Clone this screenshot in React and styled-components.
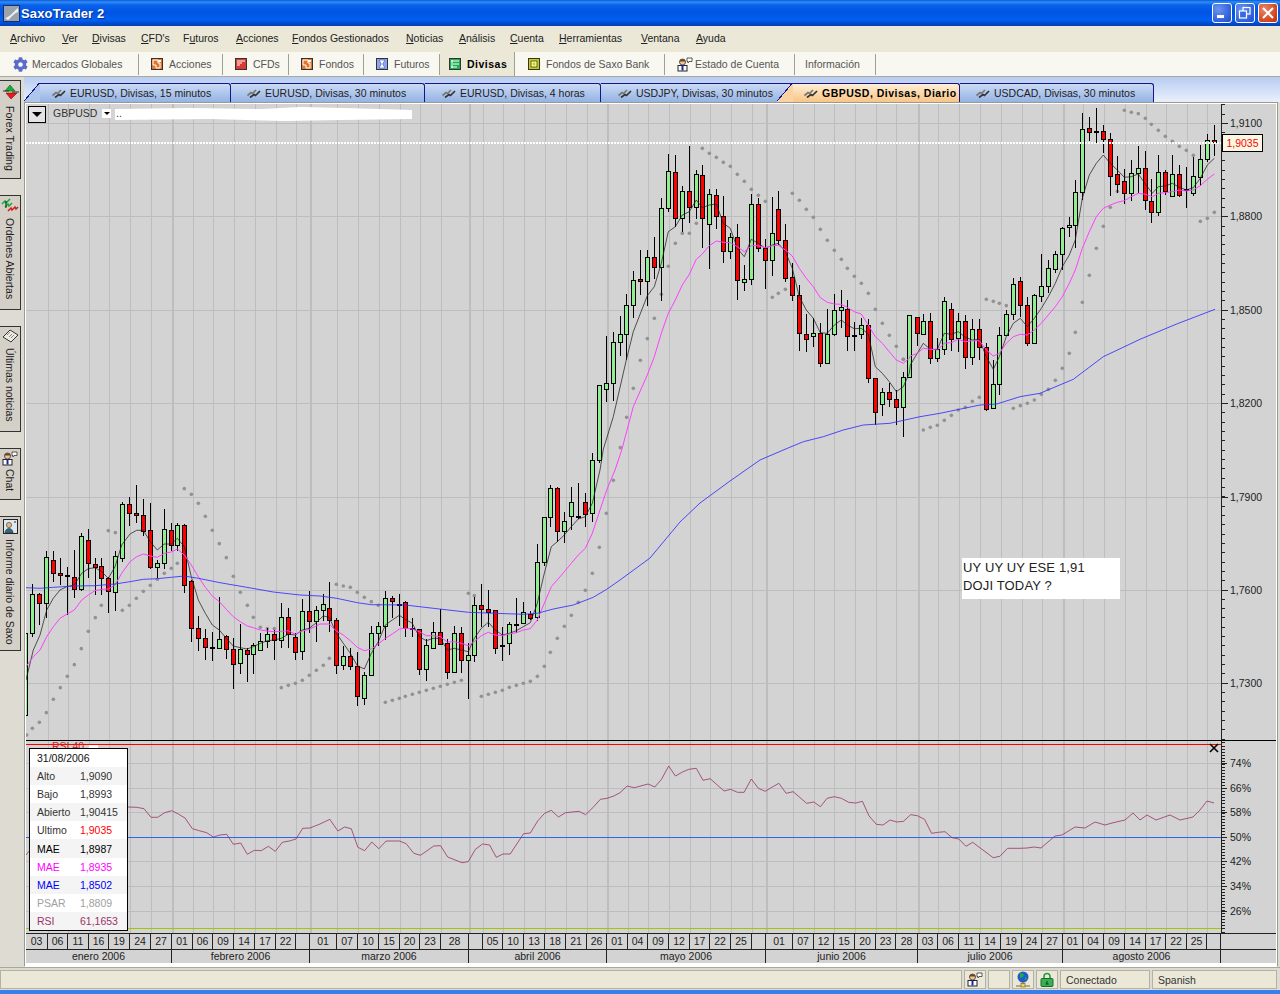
import React from 'react';
import styled, { createGlobalStyle } from 'styled-components';
import { FaCog } from 'react-icons/fa';

const UI_FONT = '"Liberation Sans", Arial, sans-serif';

// chart numbers were read off crops, so every block keeps the crop's origin (crop px = 3x page px)
const crop = (ox, oy) => (x, y) => [ox + x / 3, oy + y / 3];
const mapPts = (ox, oy, pts) => pts.map(([x, y]) => crop(ox, oy)(x, y));
const mapCandles = (ox, oy, rows) =>
  rows.map(([x, hi, top, bot, lo, c]) => ({
    x: Math.floor(ox + x / 3) + 0.5,
    hi: oy + hi / 3,
    top: oy + top / 3,
    bot: oy + bot / 3,
    lo: oy + lo / 3,
    c,
  }));

const candles = [
  ...mapCandles(20, 470, [
    [17, 490, 490, 736, 745, 'G'], [37, 343, 373, 490, 500, 'G'], [58, 370, 373, 400, 465, 'R'], [79, 243, 262, 400, 443, 'G'],
    [100, 243, 271, 310, 335, 'R'], [121, 265, 310, 316, 345, 'R'], [142, 292, 316, 319, 435, 'R'], [163, 240, 320, 358, 385, 'R'],
    [184, 190, 199, 358, 362, 'G'], [205, 178, 211, 280, 323, 'R'], [226, 265, 283, 290, 375, 'R'], [244, 265, 289, 325, 375, 'R'],
    [265, 322, 325, 364, 428, 'R'], [286, 243, 259, 367, 423, 'G'], [307, 96, 103, 265, 275, 'G'], [328, 82, 103, 130, 167, 'R'],
    [349, 45, 130, 136, 158, 'R'], [370, 88, 136, 184, 197, 'R'], [391, 100, 181, 292, 297, 'R'], [412, 270, 280, 290, 323, 'G'],
    [433, 118, 178, 280, 298, 'G'], [454, 160, 181, 226, 243, 'R'], [472, 160, 166, 226, 243, 'G'], [493, 163, 166, 346, 368, 'R'],
    [514, 330, 332, 475, 515, 'R'], [535, 438, 475, 505, 542, 'R'], [556, 477, 505, 532, 570, 'R'], [577, 487, 532, 535, 572, 'R'],
    [598, 381, 508, 535, 535, 'G'], [619, 495, 499, 538, 567, 'R'], [640, 503, 538, 583, 656, 'R'], [661, 463, 538, 580, 611, 'G'],
    [682, 533, 539, 553, 635, 'R'], [700, 520, 526, 553, 611, 'G'], [721, 489, 514, 541, 541, 'G'], [742, 475, 493, 512, 533, 'G'],
    [763, 480, 493, 511, 569, 'R'], [784, 400, 442, 511, 533, 'G'], [805, 415, 442, 493, 535, 'R'], [826, 490, 500, 547, 569, 'R'],
    [847, 388, 424, 544, 569, 'G'], [868, 363, 424, 454, 488, 'R'], [889, 408, 421, 454, 515, 'G'],
  ]),
  ...mapCandles(320, 470, [
    [10, 373, 403, 421, 452, 'G'], [28, 337, 415, 451, 485, 'R'], [49, 445, 451, 586, 611, 'R'], [70, 528, 559, 586, 600, 'G'],
    [91, 535, 559, 589, 600, 'R'], [112, 546, 589, 677, 707, 'R'], [133, 605, 616, 685, 705, 'G'], [154, 469, 490, 616, 616, 'G'],
    [175, 457, 469, 490, 527, 'G'], [196, 363, 385, 469, 510, 'G'], [217, 378, 385, 394, 445, 'R'], [238, 373, 403, 405, 468, 'R'],
    [256, 393, 395, 475, 500, 'R'], [277, 445, 475, 478, 500, 'R'], [298, 478, 478, 596, 615, 'R'], [319, 507, 526, 596, 633, 'G'],
    [340, 457, 487, 535, 535, 'G'], [361, 417, 487, 521, 525, 'R'], [382, 508, 520, 607, 627, 'R'], [403, 468, 490, 605, 608, 'G'],
    [424, 470, 490, 571, 608, 'R'], [445, 520, 556, 571, 686, 'G'], [463, 380, 406, 556, 576, 'G'], [484, 342, 406, 418, 470, 'R'],
    [505, 360, 418, 425, 470, 'R'], [526, 420, 421, 535, 553, 'R'], [547, 470, 524, 526, 572, 'R'], [568, 457, 463, 520, 555, 'G'],
    [589, 385, 461, 463, 490, 'R'], [610, 395, 427, 460, 462, 'G'], [631, 422, 431, 445, 450, 'R'], [652, 222, 277, 442, 452, 'G'],
    [673, 142, 142, 277, 288, 'G'], [691, 45, 55, 142, 170, 'G'], [712, 52, 55, 184, 216, 'R'], [733, 127, 154, 184, 220, 'G'],
    [754, 50, 97, 139, 180, 'G'], [775, 40, 139, 141, 148, 'R'], [796, 70, 97, 131, 172, 'R'], [817, -50, -30, 130, 156, 'G'],
  ]),
  ...mapCandles(590, 130, [
    [28, 765, 766, 990, 1000, 'G'], [49, 618, 760, 778, 815, 'G'], [70, 606, 637, 760, 812, 'G'], [91, 558, 613, 637, 678, 'G'],
    [109, 492, 526, 613, 690, 'G'], [130, 423, 451, 526, 564, 'G'], [151, 360, 448, 454, 495, 'R'], [172, 360, 382, 454, 528, 'G'],
    [193, 322, 382, 412, 447, 'R'], [214, 205, 235, 412, 513, 'G'], [235, 72, 124, 235, 245, 'G'], [256, 75, 127, 263, 290, 'R'],
    [277, 168, 184, 263, 305, 'G'], [298, 48, 184, 232, 280, 'R'], [319, 120, 133, 232, 267, 'G'], [337, 105, 136, 263, 355, 'R'],
    [358, 178, 193, 283, 417, 'G'], [379, 178, 196, 259, 298, 'R'], [400, 198, 259, 364, 398, 'R'], [421, 310, 322, 364, 387, 'G'],
    [442, 283, 322, 451, 510, 'R'], [463, 405, 448, 457, 483, 'G'], [484, 192, 223, 448, 465, 'G'], [505, 205, 223, 355, 365, 'R'],
    [526, 328, 355, 391, 477, 'R'], [547, 202, 310, 391, 437, 'G'], [565, 183, 238, 331, 345, 'R'], [586, 283, 331, 445, 456, 'R'],
    [607, 400, 442, 496, 513, 'R'], [628, 466, 496, 610, 662, 'R'], [649, 553, 613, 628, 665, 'R'], [670, 565, 610, 619, 650, 'G'],
    [691, 580, 610, 700, 710, 'R'], [712, 538, 613, 700, 700, 'G'], [733, 492, 541, 613, 617, 'G'], [754, 480, 532, 541, 595, 'G'],
    [772, 510, 538, 619, 662, 'R'], [793, 577, 616, 619, 662, 'R'], [814, 565, 586, 613, 627, 'G'], [835, 568, 586, 745, 760, 'R'],
    [856, 745, 745, 847, 885, 'R'], [877, 775, 787, 823, 857, 'G'], [898, 760, 787, 808, 832, 'R'], [919, 780, 808, 832, 885, 'R'],
    [940, 727, 742, 832, 922, 'G'], [958, 555, 555, 742, 745, 'G'],
  ]),
  ...mapCandles(900, 100, [
    [52, 650, 650, 700, 738, 'R'], [70, 643, 664, 703, 706, 'G'], [91, 640, 664, 775, 792, 'R'], [112, 715, 748, 775, 787, 'G'],
    [133, 592, 604, 748, 766, 'G'], [154, 610, 628, 718, 752, 'R'], [175, 640, 664, 715, 755, 'G'], [196, 645, 664, 772, 808, 'R'],
    [217, 658, 686, 772, 795, 'G'], [238, 658, 686, 742, 780, 'R'], [259, 730, 742, 927, 932, 'R'], [280, 780, 853, 925, 925, 'G'],
    [298, 682, 706, 853, 884, 'G'], [319, 630, 643, 706, 708, 'G'], [340, 535, 553, 643, 660, 'G'], [361, 530, 544, 616, 650, 'R'],
    [382, 590, 616, 730, 737, 'R'], [403, 582, 586, 730, 733, 'G'], [424, 463, 559, 589, 605, 'G'], [445, 480, 505, 559, 580, 'G'],
    [466, 452, 463, 508, 518, 'G'], [487, 380, 385, 463, 510, 'G'], [508, 350, 376, 382, 412, 'G'], [526, 240, 277, 376, 443, 'G'],
    [547, 40, 88, 277, 300, 'G'], [568, 52, 85, 97, 123, 'R'], [589, 25, 94, 97, 130, 'R'], [610, 75, 94, 118, 160, 'R'],
    [631, 100, 118, 227, 287, 'R'], [652, 168, 223, 253, 280, 'R'], [673, 208, 244, 280, 311, 'R'], [694, 180, 220, 280, 302, 'G'],
    [715, 138, 205, 220, 280, 'G'], [736, 153, 205, 301, 330, 'R'], [754, 238, 304, 337, 370, 'R'], [775, 165, 217, 337, 347, 'G'],
    [796, 210, 217, 274, 285, 'R'], [817, 165, 223, 289, 290, 'G'], [838, 195, 223, 286, 290, 'R'], [859, 200, 268, 270, 323, 'R'],
    [880, 172, 229, 280, 287, 'G'], [901, 135, 178, 232, 258, 'G'], [922, 102, 121, 178, 187, 'G'], [943, 75, 121, 127, 168, 'R'],
  ]),
];

const maeFast = [
  ...mapPts(20, 470, [[18, 630], [40, 540], [60, 495], [80, 420], [100, 385], [120, 360], [140, 350], [163, 345], [185, 310], [205, 296], [225, 293], [245, 305], [265, 325], [285, 290], [305, 225], [330, 192], [350, 181], [370, 181], [391, 215], [412, 240], [433, 222], [454, 222], [472, 205], [493, 230], [514, 320], [535, 390], [556, 430], [577, 465], [598, 480], [619, 505], [640, 528], [661, 533], [682, 537], [700, 530], [721, 520], [742, 512], [763, 510], [784, 505], [805, 493], [826, 495], [847, 480], [868, 475], [889, 458]]),
  ...mapPts(320, 470, [[0, 447], [10, 438], [28, 442], [49, 490], [70, 520], [91, 550], [112, 587], [133, 597], [154, 550], [175, 515], [196, 465], [217, 450], [238, 436], [256, 448], [277, 460], [298, 500], [319, 512], [340, 505], [361, 505], [382, 540], [403, 535], [424, 540], [445, 545], [463, 505], [484, 475], [505, 457], [526, 480], [547, 495], [568, 490], [589, 482], [610, 470], [631, 458], [652, 400], [673, 310], [694, 230], [712, 215], [733, 195], [754, 170], [775, 147], [796, 140], [817, 100], [840, 0]]),
  ...mapPts(590, 130, [[40, 958], [70, 860], [109, 690], [130, 605], [172, 497], [193, 470], [214, 400], [235, 305], [256, 290], [277, 255], [298, 245], [319, 210], [337, 233], [358, 225], [379, 222], [400, 280], [421, 295], [442, 355], [463, 380], [484, 328], [505, 340], [526, 355], [547, 345], [565, 340], [586, 365], [607, 415], [628, 500], [649, 540], [670, 565], [691, 608], [712, 610], [733, 585], [754, 570], [772, 585], [793, 596], [814, 595], [835, 612], [856, 710], [877, 730], [898, 755], [919, 785], [940, 770], [958, 730]]),
  ...mapPts(900, 100, [[31, 795], [52, 760], [70, 730], [91, 748], [112, 748], [133, 700], [154, 703], [175, 695], [196, 712], [217, 720], [238, 718], [259, 770], [280, 808], [298, 770], [319, 710], [340, 670], [361, 655], [382, 680], [403, 655], [424, 625], [445, 590], [466, 550], [487, 500], [508, 465], [526, 420], [547, 295], [568, 225], [589, 190], [610, 165], [631, 190], [652, 210], [673, 232], [694, 230], [715, 222], [736, 252], [757, 280], [775, 260], [796, 258], [817, 250], [838, 262], [859, 270], [880, 263], [901, 235], [922, 195], [943, 175]]),
];

const maeMid = [
  ...mapPts(20, 470, [[18, 590], [40, 560], [60, 540], [80, 500], [100, 470], [120, 445], [142, 432], [163, 420], [185, 390], [205, 375], [225, 362], [245, 358], [265, 357], [285, 345], [305, 310], [330, 275], [350, 260], [370, 252], [391, 258], [412, 262], [433, 250], [454, 246], [472, 237], [493, 255], [514, 285], [535, 320], [556, 352], [577, 378], [598, 395], [619, 418], [640, 440], [661, 455], [682, 468], [700, 473], [721, 480], [742, 483], [763, 485], [784, 484], [805, 482], [826, 493], [847, 483], [868, 478], [889, 468]]),
  ...mapPts(320, 470, [[0, 462], [28, 462], [49, 483], [70, 495], [91, 512], [112, 532], [133, 542], [154, 537], [175, 522], [196, 505], [217, 492], [238, 477], [256, 475], [277, 477], [298, 485], [319, 497], [340, 497], [361, 500], [382, 516], [403, 515], [424, 520], [445, 527], [463, 515], [484, 497], [505, 487], [526, 495], [547, 497], [568, 492], [589, 488], [610, 480], [631, 476], [652, 450], [673, 400], [694, 350], [712, 330], [733, 305], [754, 280], [775, 255], [796, 235], [817, 190], [840, 120], [860, 60], [885, 0]]),
  ...mapPts(590, 130, [[95, 960], [130, 830], [172, 735], [193, 680], [214, 610], [235, 550], [256, 510], [277, 465], [298, 433], [319, 388], [337, 372], [358, 347], [379, 333], [400, 337], [421, 338], [442, 350], [463, 365], [484, 347], [505, 347], [526, 353], [547, 347], [565, 346], [586, 360], [607, 378], [628, 415], [649, 445], [670, 470], [691, 503], [712, 517], [733, 522], [754, 523], [772, 532], [793, 545], [814, 552], [835, 585], [856, 620], [877, 640], [898, 665], [919, 690], [940, 700], [958, 685]]),
  ...mapPts(900, 100, [[31, 768], [52, 760], [70, 745], [91, 748], [112, 750], [133, 730], [154, 728], [175, 718], [196, 725], [217, 722], [238, 722], [259, 750], [280, 768], [298, 760], [319, 730], [340, 710], [361, 703], [382, 705], [403, 690], [424, 670], [445, 645], [466, 620], [487, 590], [508, 550], [526, 510], [547, 445], [568, 395], [589, 350], [610, 325], [631, 315], [652, 307], [673, 302], [694, 290], [715, 280], [736, 283], [757, 290], [775, 280], [796, 278], [817, 275], [838, 270], [859, 273], [880, 270], [901, 257], [922, 238], [943, 222]]),
];

const maeSlow = [
  ...mapPts(20, 470, [[18, 353], [60, 355], [100, 352], [163, 348], [225, 347], [285, 342], [330, 335], [370, 328], [412, 326], [454, 322], [493, 318], [535, 325], [600, 338], [680, 352], [760, 366], [840, 375], [900, 378]]),
  ...mapPts(320, 470, [[50, 385], [112, 398], [154, 404], [256, 405], [340, 415], [445, 427], [526, 430], [610, 433], [652, 430], [700, 417], [760, 405], [820, 382], [860, 358], [900, 330]]),
  [650, 558], [680, 522], [700, 503], [730, 481], [760, 460],
  ...mapPts(590, 130, [[585, 958], [640, 935], [700, 920], [760, 900], [820, 885], [900, 880]]),
  ...mapPts(900, 100, [[60, 950], [120, 940], [240, 915], [290, 912], [360, 890], [420, 880], [520, 838], [610, 770], [720, 718], [830, 672], [945, 628]]),
];

const psar = [
  ...mapPts(20, 470, [[20, 795], [37, 775], [58, 757], [79, 728], [100, 688], [121, 653], [142, 619], [163, 584], [184, 536], [205, 484], [226, 443], [244, 406], [307, 421], [328, 406], [349, 385], [370, 364], [391, 346], [412, 328], [433, 310], [454, 295], [472, 280], [265, 182], [286, 188], [493, 56], [514, 73], [535, 100], [556, 139], [577, 181], [598, 221], [619, 263], [640, 319], [661, 367], [682, 406], [700, 442], [721, 472], [742, 476], [763, 476], [784, 653], [805, 646], [826, 640], [847, 631], [868, 616], [889, 601]]),
  ...mapPts(320, 470, [[10, 586], [28, 565], [49, 343], [70, 348], [91, 352], [112, 367], [133, 382], [154, 395], [175, 406], [196, 697], [217, 691], [238, 685], [256, 679], [277, 673], [298, 667], [319, 661], [340, 655], [361, 649], [382, 643], [403, 637], [424, 631], [445, 370], [463, 377], [484, 679], [505, 673], [526, 667], [547, 661], [568, 652], [589, 646], [610, 640], [631, 634], [652, 619], [673, 589], [691, 547], [712, 505], [733, 469], [754, 436], [775, 397], [796, 361], [817, 310], [838, 232], [859, 130], [880, 31]]),
  ...mapPts(590, 130, [[91, 953], [110, 862], [130, 775], [151, 691], [172, 626], [193, 565], [214, 493], [235, 409], [256, 340], [277, 310], [298, 310], [319, 280], [337, 55], [358, 70], [379, 82], [400, 97], [421, 109], [442, 133], [463, 154], [484, 178], [505, 196], [526, 214], [547, 502], [565, 490], [586, 478], [607, 190], [628, 211], [649, 238], [670, 262], [691, 298], [712, 331], [733, 361], [754, 388], [772, 415], [793, 439], [814, 460], [835, 490], [856, 538], [877, 580], [898, 616], [919, 649], [940, 688]]),
  ...mapPts(900, 100, [[10, 778], [70, 990], [91, 982], [112, 976], [133, 961], [154, 946], [175, 930], [196, 922], [217, 904], [238, 892], [340, 925], [361, 917], [382, 910], [403, 900], [424, 883], [445, 868], [466, 841], [487, 805], [508, 760], [526, 697], [547, 607], [568, 526], [589, 445], [610, 379], [631, 322], [652, 274], [259, 598], [280, 604], [298, 610], [319, 617], [673, 31], [694, 37], [715, 41], [736, 55], [754, 73], [775, 91], [796, 109], [817, 124], [838, 139], [859, 151], [880, 166], [901, 364], [922, 355], [943, 337]]),
];

// the RSI crop came back 2.24x wide, 3x tall
const rsiMid = [[0, 252], [22, 238], [40, 273], [55, 261], [70, 266], [85, 322], [100, 332], [116, 306], [132, 326], [148, 303], [178, 303], [193, 311], [210, 340], [225, 346], [255, 318], [270, 317], [286, 351], [318, 368], [332, 365], [348, 328], [364, 312], [380, 315], [395, 352], [410, 342], [426, 342], [456, 281], [471, 279], [488, 242], [503, 220], [518, 211], [534, 231], [550, 218], [580, 214], [595, 224], [612, 202], [628, 178], [643, 175], [658, 168], [672, 158], [688, 138], [704, 143], [735, 132], [750, 141], [765, 118], [781, 78], [796, 108], [812, 96], [826, 88], [843, 85], [858, 121], [874, 116], [905, 153], [920, 148], [935, 157], [950, 157], [966, 117], [982, 145], [997, 154], [1012, 142], [1028, 130], [1044, 160], [1060, 155], [1090, 190], [1106, 186], [1121, 200], [1136, 175], [1152, 170], [1168, 175], [1184, 187], [1200, 189], [1215, 184], [1230, 228], [1246, 253], [1261, 255], [1277, 240], [1292, 246], [1307, 244], [1323, 224], [1338, 227], [1354, 238], [1370, 280], [1385, 277], [1400, 275], [1416, 293], [1431, 297], [1447, 319], [1462, 307], [1508, 353], [1523, 349], [1540, 325], [1568, 325]];

const rsiLine = [
  [26, 855], [30, 850], [127, 807],
  ...mapPts(0, 730, [[410, 232], [432, 236], [453, 262], [473, 262], [494, 248], [515, 242], [535, 252], [555, 264], [577, 296], [598, 302], [620, 308], [640, 321], [660, 315], [680, 313], [700, 343], [722, 339], [742, 373], [763, 361], [784, 362], [805, 349], [826, 364], [847, 337], [868, 333], [888, 327], [908, 295], [930, 294]]),
  ...rsiMid.map(([x, y]) => [320 + x / 2.24, 740 + y / 3]),
  [1027, 848], [1034, 847], [1041, 848], [1055, 836], [1062, 835], [1075, 827], [1085, 828], [1095, 822], [1105, 825], [1112, 823], [1125, 820], [1133, 813], [1140, 820], [1147, 815], [1156, 820], [1170, 815], [1180, 820], [1193, 817], [1200, 810], [1207, 801], [1214, 803],
];

const dates = [['03', 48], ['06', 68], ['11', 89], ['16', 109], ['19', 130], ['24', 151], ['27', 172], ['01', 193], ['06', 213], ['09', 234], ['14', 255], ['17', 276], ['22', 296], ['', 310], ['01', 337], ['07', 358], ['10', 379], ['15', 400], ['20', 420], ['23', 441], ['28', 469], ['', 483], ['05', 503], ['10', 524], ['13', 545], ['18', 566], ['21', 587], ['26', 607], ['01', 628], ['04', 648], ['09', 669], ['12', 690], ['17', 710], ['22', 731], ['25', 752], ['', 766], ['01', 793], ['07', 814], ['12', 834], ['15', 855], ['20', 876], ['23', 896], ['28', 918], ['03', 938], ['06', 959], ['11', 980], ['14', 1001], ['19', 1022], ['24', 1042], ['27', 1063], ['01', 1083], ['04', 1104], ['09', 1125], ['14', 1146], ['17', 1166], ['22', 1187], ['25', 1207], ['', 1221]];
const months = [['enero 2006', 172], ['febrero 2006', 310], ['marzo 2006', 469], ['abril 2006', 607], ['mayo 2006', 766], ['junio 2006', 918], ['julio 2006', 1063], ['agosto 2006', 1221]];
const monthEnds = months.map((m) => m[1]);
const gridX = dates.slice(0, -1).map((d) => d[1]);

const withWidths = (cells) => {
  let prev = 26;
  return cells.map(([label, end]) => {
    const w = end - prev;
    prev = end;
    return { label, w };
  });
};

const priceLabels = [['1,9100', 123], ['1,8800', 216], ['1,8500', 310], ['1,8200', 403], ['1,7900', 497], ['1,7600', 590], ['1,7300', 683]];
const rsiLabels = [['74%', 763], ['66%', 788], ['58%', 812], ['50%', 837], ['42%', 861], ['34%', 886], ['26%', 911]];

const menuItems = [
  ['A', 'rchivo', 52], ['V', 'er', 30], ['D', 'ivisas', 49], ['C', "FD's", 42], ['F', 'uturos', 53, true], ['A', 'cciones', 56],
  ['F', 'ondos Gestionados', 114], ['N', 'oticias', 53], ['A', 'nálisis', 51], ['C', 'uenta', 49], ['H', 'erramientas', 82], ['V', 'entana', 55], ['A', 'yuda', 40],
];

const tabs = [
  { label: 'EURUSD, Divisas, 15 minutos', w: 191, slant: true, pad: 12 },
  { label: 'EURUSD, Divisas, 30 minutos', w: 194, pad: 16 },
  { label: 'EURUSD, Divisas, 4 horas', w: 176, pad: 17 },
  { label: 'USDJPY, Divisas, 30 minutos', w: 192, pad: 17 },
  { label: 'GBPUSD, Divisas, Diario', w: 167, active: true, slant: true, pad: 11 },
  { label: 'USDCAD, Divisas, 30 minutos', w: 194, pad: 16 },
];

const infoRows = [
  ['Alto', '1,9090', '#333', '#333'],
  ['Bajo', '1,8993', '#333', '#333'],
  ['Abierto', '1,90415', '#333', '#333'],
  ['Ultimo', '1,9035', '#333', '#f00'],
  ['MAE', '1,8987', '#000', '#000'],
  ['MAE', '1,8935', '#f0f', '#f0f'],
  ['MAE', '1,8502', '#00f', '#00f'],
  ['PSAR', '1,8809', '#a0a0a0', '#a0a0a0'],
  ['RSI', '61,1653', '#993366', '#993366'],
];

const GlobalStyle = createGlobalStyle`
  html, body { margin: 0; padding: 0; background: #dedbd2; }
  body { font-family: ${UI_FONT}; overflow: hidden; }
`;

const Window = styled.div`
  width: 1280px;
  height: 994px;
  display: flex;
  flex-direction: column;
  overflow: hidden;
  background: #dedbd2;
  font-size: 10.5px;
`;

const TitleBar = styled.div`
  height: 26px;
  display: flex;
  align-items: center;
  padding: 0 2px 0 3px;
  background: linear-gradient(#0a58d8 0, #2f8df5 2px, #0a62ea 5px, #0054e3 12px, #0060f0 20px, #0048c8 24px, #0a3fb0 26px);
`;

const TitleText = styled.span`
  margin-left: 1px;
  flex: 1;
  color: #fff;
  font-weight: bold;
  font-size: 13px;
  letter-spacing: 0.15px;
  text-shadow: 1px 1px 0 #0b2f90;
`;

const WinButton = styled.div`
  width: 20px;
  height: 20px;
  margin-left: 3px;
  border: 1px solid #fff;
  border-radius: 3px;
  box-sizing: border-box;
  display: flex;
  align-items: center;
  justify-content: center;
  background: ${({ $close }) =>
    $close
      ? 'radial-gradient(circle at 30% 30%, #e8866a, #d2441c 70%, #b83410)'
      : 'radial-gradient(circle at 30% 30%, #6c94f0, #2f5fdc 70%, #2450c8)'};
`;

const MenuBar = styled.div`
  height: 26px;
  box-sizing: border-box;
  display: flex;
  align-items: center;
  padding: 0 0 2px 10px;
  background: #ebe8d8;
`;

const MenuItem = styled.span`
  width: ${({ $w }) => $w}px;
  flex: none;
  color: #222;

  u { text-decoration: underline; }
`;

const NavBar = styled.div`
  height: 24px;
  display: flex;
  align-items: stretch;
  background: #f8f7f0;
  border-bottom: 1px solid #a8a8a0;
  box-sizing: content-box;
`;

const NavItem = styled.div`
  flex: none;
  width: ${({ $w }) => $w}px;
  box-sizing: border-box;
  display: flex;
  align-items: center;
  gap: ${({ $gap }) => $gap ?? 6}px;
  padding-left: ${({ $pad }) => $pad}px;
  color: ${({ $active }) => ($active ? '#000' : '#555')};
  font-weight: ${({ $active }) => ($active ? 'bold' : 'normal')};
  letter-spacing: ${({ $active }) => ($active ? '0.5px' : '0')};
  background: ${({ $active }) => ($active ? '#ebe8d8' : 'transparent')};
  position: relative;

  &::after {
    content: '';
    position: absolute;
    right: 0;
    top: ${({ $active }) => ($active ? 0 : 2)}px;
    bottom: ${({ $active }) => ($active ? 0 : 1)}px;
    width: 1px;
    background: #a0a098;
  }
`;

const Body = styled.div`
  flex: 1;
  display: flex;
  min-height: 0;
`;

const Sidebar = styled.div`
  width: 24px;
  flex: none;
  display: flex;
  flex-direction: column;
  gap: 16px;
  padding-top: 3px;
  box-sizing: border-box;
`;

const SideTab = styled.div`
  width: 21px;
  height: ${({ $h }) => $h}px;
  box-sizing: border-box;
  background: #d4d0c8;
  border: 1px solid #333;
  border-left: none;
  writing-mode: vertical-rl;
  display: flex;
  align-items: center;
  gap: ${({ $gap }) => $gap}px;
  padding-top: 2px;
  color: #222;
  white-space: nowrap;

  svg { flex: none; }
`;

const Workspace = styled.div`
  flex: 1;
  display: flex;
  flex-direction: column;
  min-width: 0;
`;

const TabStrip = styled.div`
  height: 25px;
  box-sizing: border-box;
  padding: 6px 0 0 16px;
  display: flex;
  background: linear-gradient(#b7ccf2, #e6edfb 90%);
`;

const Tab = styled.div`
  width: ${({ $w }) => $w}px;
  flex: none;
  height: 19px;
  box-sizing: border-box;
  position: relative;
  display: flex;
  align-items: center;
  gap: 4px;
  padding-left: ${({ $pad }) => $pad}px;
  border-top: 1px solid #14148c;
  border-right: 1px solid #14148c;
  border-top-right-radius: 3px;
  color: ${({ $active }) => ($active ? '#000' : '#222')};
  font-weight: ${({ $active }) => ($active ? 'bold' : 'normal')};
  letter-spacing: ${({ $active }) => ($active ? '0.5px' : '0')};
  background: ${({ $active }) =>
    $active ? 'linear-gradient(#fdeed8, #f9c584)' : 'linear-gradient(#cbdaf4, #94b3e4)'};
  white-space: nowrap;

  &::before {
    content: ${({ $slant }) => ($slant ? "''" : 'none')};
    position: absolute;
    left: -16px;
    top: -1px;
    width: 16px;
    height: 19px;
    background: linear-gradient(
      to bottom right,
      transparent calc(50% - 1px),
      #14148c calc(50% - 1px),
      #14148c 50%,
      ${({ $active }) => ($active ? '#fbd3a0' : '#aec6ec')} 50%
    );
  }
`;

const ChartFrame = styled.div`
  flex: 1;
  min-height: 0;
  border-top: 1px solid #9a9a92;
  border-left: 1px solid #9a9a92;
  border-right: 1px solid #9a9a92;
  border-bottom: 1px solid #fff;
  margin-right: 2px;
  padding: 1px 1px 0;
  background: #fff;
  display: flex;
  flex-direction: column;
  align-items: flex-start;
`;

const Pane = styled.div`
  position: relative;
  flex: none;
  width: 1250px;
  height: ${({ $h }) => $h}px;
  background: #d3d3d3;
  border-bottom: ${({ $line }) => ($line ? '1px solid #000' : 'none')};
  box-sizing: content-box;

  svg.plot { display: block; font-family: ${UI_FONT}; }
`;

const IconBtn = styled.div`
  position: absolute;
  left: 2px;
  top: 2px;
  width: 18px;
  height: 17px;
  box-sizing: border-box;
  border: 1px solid #000;
  background: #e4e4e4;
  display: flex;
  align-items: center;
  justify-content: center;
`;

const Symbol = styled.span`
  position: absolute;
  left: 27px;
  top: 2px;
  color: #333;
  line-height: 14px;
`;

const SymbolMenu = styled.div`
  position: absolute;
  left: 76px;
  top: 5px;
  width: 9px;
  height: 9px;
  background: #fff;
  display: flex;
  align-items: center;
  justify-content: center;
`;

const Arrow = styled.i`
  width: 0;
  height: 0;
  border-left: ${({ $s }) => $s}px solid transparent;
  border-right: ${({ $s }) => $s}px solid transparent;
  border-top: ${({ $s }) => $s}px solid #000;
`;

const PriceTag = styled.div`
  position: absolute;
  left: 1196px;
  top: 30px;
  width: 41px;
  height: 18px;
  box-sizing: border-box;
  border: 1px solid #000;
  background: #fbf9e4;
  color: #f00;
  text-align: center;
  line-height: 16px;
`;

const Note = styled.div`
  position: absolute;
  left: 936px;
  top: 454px;
  width: 158px;
  height: 41px;
  box-sizing: border-box;
  padding: 1px 0 0 1px;
  background: #fff;
  color: #222;
  font-size: 13px;
  line-height: 18px;
  letter-spacing: 0.15px;
  white-space: nowrap;
`;

const InfoBox = styled.div`
  position: absolute;
  left: 3px;
  top: 7px;
  width: 99px;
  box-sizing: border-box;
  border: 1px solid #000;
  background: #fff;
`;

const InfoRow = styled.div`
  height: 18.1px;
  display: grid;
  grid-template-columns: 43px auto;
  align-items: center;
  padding-left: 7px;
  background: ${({ $alt }) => ($alt ? '#f4f4f4' : '#fff')};
`;

const InfoCell = styled.span`
  color: ${({ $color }) => $color};
  white-space: nowrap;
`;

const AxisRow = styled.div`
  flex: none;
  width: 1250px;
  height: ${({ $h }) => $h}px;
  box-sizing: border-box;
  display: flex;
  background: #d3d3d3;
  border-top: 1px solid #222;
`;

const AxisCell = styled.div`
  flex: none;
  width: ${({ $w }) => $w}px;
  box-sizing: border-box;
  border-right: 1px solid #222;
  text-align: center;
  color: #222;
  line-height: ${({ $lh }) => $lh}px;
  white-space: nowrap;
`;

const StatusBar = styled.div`
  height: 23px;
  flex: none;
  box-sizing: border-box;
  border-top: 1px solid #a8a89a;
  padding-top: 2px;
  display: flex;
  gap: 2px;
  padding-right: 3px;
  background: #dedbd2;
`;

const StatusCell = styled.div`
  flex: ${({ $grow }) => ($grow ? '1' : 'none')};
  width: ${({ $w }) => ($w ? `${$w}px` : 'auto')};
  height: 19px;
  box-sizing: border-box;
  border: 1px solid #b4b2a4;
  background: #ebe8d8;
  display: flex;
  align-items: center;
  justify-content: ${({ $icon }) => ($icon ? 'center' : 'flex-start')};
  padding-left: ${({ $icon }) => ($icon ? 0 : 5)}px;
  color: #333;
`;

const BottomEdge = styled.div`
  height: 4px;
  flex: none;
  background: #3a7ee8;
`;

const SquareIcon = ({ fill, children }) => (
  <svg width="12" height="12" viewBox="0 0 12 12">
    <rect x="0.5" y="0.5" width="11" height="11" fill={fill} stroke="#333" />
    {children}
  </svg>
);

const ShareIcon = () => (
  <SquareIcon fill="#e4762a">
    <path d="M2 2h5v3H9v5H5V7H2z" fill="none" stroke="#fff" />
    <rect x="7" y="2" width="3" height="2" fill="#fff" />
  </SquareIcon>
);

const CfdIcon = () => (
  <SquareIcon fill="#d83a34">
    <path d="M2 3h8M2 5h5M2 7h3" stroke="#fff" />
  </SquareIcon>
);

const FutureIcon = () => (
  <SquareIcon fill="#8ea6ec">
    <path d="M3 2h6L6.7 6 9 10H3l2.3-4z" fill="#fff" stroke="#4a62c8" strokeWidth="0.7" />
  </SquareIcon>
);

const ForexIcon = () => (
  <SquareIcon fill="#1eb050">
    <path d="M2 3h8M4 6h6M2 9h6" stroke="#fff" />
    <path d="M3 2v8" stroke="#fff" />
  </SquareIcon>
);

const FundIcon = () => (
  <SquareIcon fill="#c8cc1a">
    <rect x="3" y="3" width="6" height="6" fill="#f4f4c8" stroke="#6a7008" />
    <circle cx="6" cy="6" r="1.4" fill="#c8cc1a" />
  </SquareIcon>
);

const PersonIcon = ({ bubble }) => (
  <svg width="16" height="15" viewBox="0 0 16 15">
    <circle cx="5.5" cy="5" r="3" fill="#f0c890" stroke="#333" strokeWidth="0.8" />
    <path d="M2.5 4.5C3 1.5 8 1.5 8.5 4.5z" fill="#6a4020" />
    <rect x="1" y="8.5" width="9" height="5.5" fill="#fff" stroke="#223" />
    <path d="M5.5 8.5v5" stroke="#1a2a9c" strokeWidth="2" />
    {bubble && <path d="M10 1h5v3.5h-3L11 6V4.5h-1z" fill="#fff" stroke="#333" strokeWidth="0.8" />}
  </svg>
);

const TradeIcon = () => (
  <svg width="14" height="10" viewBox="0 0 14 10">
    <path d="M0.5 7.5L4 4.5l1.5 1L9 2" fill="none" stroke="#777" strokeWidth="1.7" />
    <path d="M3 9.5L7 6.5l1.5 1L13 3" fill="none" stroke="#333" strokeWidth="1.7" />
  </svg>
);

const UpDownIcon = () => (
  <svg width="17" height="17" viewBox="0 0 17 17" style={{ marginTop: 1 }}>
    <path d="M8 1l5 6H3z" fill="#12b030" stroke="#0a5a1a" strokeWidth="0.6" />
    <path d="M1 7h6" stroke="#333" />
    <path d="M9 15L4 9h11z" fill="#ee1818" stroke="#7a0a0a" strokeWidth="0.6" />
    <path d="M10 8h7" stroke="#333" />
  </svg>
);

const TicksIcon = () => (
  <svg width="18" height="16" viewBox="0 0 18 16">
    <path d="M1 6l3-3 1 2 4-4M4 9l3-3 1 2 3-3" fill="none" stroke="#18a83c" strokeWidth="1.6" />
    <path d="M7 13l3-3 1 2 3-3 1 2 2-2" fill="none" stroke="#d41c1c" strokeWidth="1.6" />
    <path d="M5 3v7" stroke="#222" />
  </svg>
);

const NewsIcon = () => (
  <svg width="17" height="15" viewBox="0 0 17 15">
    <path d="M8 1l8 5-7 7-8-5z" fill="#ecebe2" stroke="#333" />
    <path d="M5 6l3-3M7 8l3-3M9 9l3-3" stroke="#888" />
  </svg>
);

const ReportIcon = () => (
  <svg width="15" height="15" viewBox="0 0 15 15">
    <rect x="0.5" y="0.5" width="14" height="14" fill="#dfe8ee" stroke="#222" />
    <circle cx="6" cy="6" r="2.6" fill="#e8b888" stroke="#333" strokeWidth="0.6" />
    <path d="M2 14c0-6 8-6 8 0z" fill="#2a6a8a" stroke="#333" strokeWidth="0.6" />
    <rect x="11" y="2" width="2" height="2" fill="#888" />
  </svg>
);

const GlobeIcon = () => (
  <svg width="17" height="17" viewBox="0 0 17 17">
    <circle cx="8" cy="6" r="5.5" fill="#1c5cd0" />
    <path d="M5 2l4 1-1 3-3 1zM10 6l2 1-2 3z" fill="#2aa838" />
    <path d="M8 11v2M1 15h14" stroke="#806a20" />
    <rect x="6" y="12.5" width="4" height="3.5" fill="#f4d060" stroke="#806a20" strokeWidth="0.7" />
  </svg>
);

const LockIcon = () => (
  <svg width="14" height="15" viewBox="0 0 14 15">
    <path d="M4 7V4.5a3 3 0 0 1 6 0V7" fill="none" stroke="#2a9a44" strokeWidth="1.6" />
    <rect x="1" y="6.5" width="12" height="8" rx="1" fill="#3ab054" stroke="#1a6a2c" />
    <path d="M7 9v3M5.5 12h3" stroke="#0c3a18" />
  </svg>
);

const Polyline = ({ pts, color, width = 1, opacity = 1 }) => (
  <polyline
    points={pts.map(([x, y]) => `${x.toFixed(1)},${y.toFixed(1)}`).join(' ')}
    fill="none"
    stroke={color}
    strokeWidth={width}
    opacity={opacity}
    strokeLinejoin="round"
  />
);

const GridLines = ({ rows, top, bottom }) => (
  <g shapeRendering="crispEdges" stroke="#bdbdbd">
    {gridX.map((x) => (
      <line key={x} x1={x + 0.5} x2={x + 0.5} y1={top} y2={bottom} strokeWidth={monthEnds.includes(x) ? 2 : 1} />
    ))}
    {rows.map((y) => (
      <line key={y} x1="26" x2="1221" y1={y + 0.5} y2={y + 0.5} />
    ))}
  </g>
);

const AxisTicks = ({ top, bottom, step, anchor }) => {
  const ticks = [];
  for (let y = anchor; y < bottom; y += step) ticks.push(y);
  for (let y = anchor - step; y > top; y -= step) ticks.push(y);
  return (
    <g shapeRendering="crispEdges" stroke="#222">
      <line x1="1221.5" x2="1221.5" y1={top} y2={bottom} />
      {ticks.map((y) => (
        <line key={y} x1="1221" x2="1225" y1={Math.round(y) + 0.5} y2={Math.round(y) + 0.5} />
      ))}
    </g>
  );
};

const Candle = ({ x, hi, top, bot, lo, c }) => (
  <g shapeRendering="crispEdges">
    <line x1={x} x2={x} y1={hi} y2={lo} stroke="#000" />
    <rect
      x={x - 2}
      y={Math.round(top) + 0.5}
      width={4}
      height={Math.max(Math.round(bot) - Math.round(top), 1)}
      fill={c === 'G' ? '#90ee90' : '#f00'}
      stroke="#000"
    />
  </g>
);

const MainPlot = () => (
  <svg className="plot" width="1250" height="636" viewBox="26 104 1250 636">
    <GridLines rows={priceLabels.map((p) => p[1])} top={104} bottom={740} />
    {psar.map(([x, y], i) => (
      <circle key={i} cx={x} cy={y} r="1.8" fill="#929292" />
    ))}
    {candles.map((c, i) => (
      <Candle key={i} {...c} />
    ))}
    <Polyline pts={maeFast} color="#222" opacity={0.75} />
    <Polyline pts={maeMid} color="#ff40ff" />
    <Polyline pts={maeSlow} color="#3030ff" opacity={0.85} />
    <line x1="26" x2="1221" y1="143" y2="143" stroke="#fff" strokeWidth="2" strokeDasharray="2 1" />
    <AxisTicks top={104} bottom={740} step={9.33} anchor={123} />
    {priceLabels.map(([t, y]) => (
      <g key={t}>
        <line x1="1221" x2="1228" y1={y + 0.5} y2={y + 0.5} stroke="#222" shapeRendering="crispEdges" />
        <text x="1230" y={y + 4} fontSize="10.5" fill="#222">{t}</text>
      </g>
    ))}
    <path d="M115 109 L190 108 L262 109 L300 107 L345 108 L412 110 L412 119 L340 120 L285 121 L210 119 L115 120Z" fill="#fff" />
    <text x="116" y="117" fontSize="10.5" fill="#333">..</text>
  </svg>
);

const RsiPlot = () => (
  <svg className="plot" width="1250" height="192" viewBox="26 741 1250 192">
    <GridLines rows={rsiLabels.map((p) => p[1])} top={741} bottom={933} />
    <line x1="26" x2="1221" y1="837.5" y2="837.5" stroke="#2a66f0" shapeRendering="crispEdges" />
    <line x1="26" x2="1221" y1="744.5" y2="744.5" stroke="#f00" strokeWidth="1.2" shapeRendering="crispEdges" />
    <line x1="26" x2="1221" y1="928.5" y2="928.5" stroke="#a0c800" shapeRendering="crispEdges" />
    <Polyline pts={rsiLine} color="#993366" opacity={0.8} />
    <text x="52" y="750" fontSize="10.5" fill="#cc2020">RSI 40</text>
    <rect x="89" y="745" width="9" height="4" fill="#fff" />
    <AxisTicks top={741} bottom={933} step={3.05} anchor={837} />
    {rsiLabels.map(([t, y]) => (
      <g key={t}>
        <line x1="1221" x2="1227" y1={y + 0.5} y2={y + 0.5} stroke="#222" shapeRendering="crispEdges" />
        <text x="1230" y={y + 4} fontSize="10.5" fill="#222">{t}</text>
      </g>
    ))}
    <path d="M1210 744l8 8M1218 744l-8 8" stroke="#000" strokeWidth="1.6" />
  </svg>
);

const App = () => (
  <Window>
    <GlobalStyle />
    <TitleBar>
      <svg width="17" height="17" viewBox="0 0 17 17">
        <rect x="0.5" y="0.5" width="16" height="16" fill="#9aa2ae" stroke="#12306e" />
        <path d="M2 13C7 12 10 7 15 3L15 7C10 9 8 13 5 15z" fill="#eef0f4" />
      </svg>
      <TitleText>SaxoTrader 2</TitleText>
      <WinButton>
        <svg width="14" height="14" viewBox="0 0 14 14"><rect x="2" y="9" width="7" height="3" fill="#fff" /></svg>
      </WinButton>
      <WinButton>
        <svg width="14" height="14" viewBox="0 0 14 14" fill="none" stroke="#fff">
          <rect x="5" y="1.5" width="7" height="6.5" strokeWidth="1.2" />
          <rect x="1.5" y="5" width="7" height="7" fill="#3a68e0" strokeWidth="1.2" />
        </svg>
      </WinButton>
      <WinButton $close>
        <svg width="14" height="14" viewBox="0 0 14 14"><path d="M2 2l10 10M12 2L2 12" stroke="#fff" strokeWidth="2" /></svg>
      </WinButton>
    </TitleBar>

    <MenuBar>
      {menuItems.map(([key, rest, w, second]) => (
        <MenuItem key={key + rest} $w={w}>
          {second ? <>{key}<u>{rest[0]}</u>{rest.slice(1)}</> : <><u>{key}</u>{rest}</>}
        </MenuItem>
      ))}
    </MenuBar>

    <NavBar>
      <NavItem $w={139} $pad={13} $gap={4}><FaCog size={15} color="#5a6cc8" />Mercados Globales</NavItem>
      <NavItem $w={84} $pad={12}><ShareIcon />Acciones</NavItem>
      <NavItem $w={66} $pad={12}><CfdIcon />CFDs</NavItem>
      <NavItem $w={75} $pad={12}><ShareIcon />Fondos</NavItem>
      <NavItem $w={76} $pad={12}><FutureIcon />Futuros</NavItem>
      <NavItem $w={75} $pad={9} $active $gap={6}><ForexIcon />Divisas</NavItem>
      <NavItem $w={150} $pad={13}><FundIcon />Fondos de Saxo Bank</NavItem>
      <NavItem $w={130} $pad={12} $gap={2}><PersonIcon bubble />Estado de Cuenta</NavItem>
      <NavItem $w={81} $pad={10}>Información</NavItem>
    </NavBar>

    <Body>
      <Sidebar>
        <SideTab $h={99} $gap={5}><UpDownIcon />Forex Trading</SideTab>
        <SideTab $h={115} $gap={4}><TicksIcon />Ordenes Abiertas</SideTab>
        <SideTab $h={106} $gap={4}><NewsIcon />Últimas noticias</SideTab>
        <SideTab $h={52} $gap={3}><PersonIcon bubble />Chat</SideTab>
        <SideTab $h={135} $gap={5}><ReportIcon />Informe diario de Saxo</SideTab>
      </Sidebar>

      <Workspace>
        <TabStrip>
          {tabs.map((t) => (
            <Tab key={t.label} $w={t.w} $pad={t.pad} $active={t.active} $slant={t.slant}>
              <TradeIcon />
              {t.label}
            </Tab>
          ))}
        </TabStrip>

        <ChartFrame>
          <Pane $h={636} $line>
            <MainPlot />
            <IconBtn><Arrow $s={5} /></IconBtn>
            <Symbol>GBPUSD</Symbol>
            <SymbolMenu><Arrow $s={3} /></SymbolMenu>
            <PriceTag>1,9035</PriceTag>
            <Note>UY UY UY ESE 1,91<br />DOJI TODAY ?</Note>
          </Pane>

          <Pane $h={192}>
            <RsiPlot />
            <InfoBox>
              <InfoRow><InfoCell $color="#111" style={{ gridColumn: '1 / 3' }}>31/08/2006</InfoCell></InfoRow>
              {infoRows.map(([label, value, labelColor, valueColor], i) => (
                <InfoRow key={label + value} $alt={i % 2 === 0}>
                  <InfoCell $color={labelColor}>{label}</InfoCell>
                  <InfoCell $color={valueColor}>{value}</InfoCell>
                </InfoRow>
              ))}
            </InfoBox>
          </Pane>

          <AxisRow $h={16}>
            {withWidths(dates).map((d, i) => (
              <AxisCell key={i} $w={d.w} $lh={15}>{d.label}</AxisCell>
            ))}
          </AxisRow>
          <AxisRow $h={14}>
            {withWidths(months).map((m) => (
              <AxisCell key={m.label} $w={m.w} $lh={13}>{m.label}</AxisCell>
            ))}
          </AxisRow>
        </ChartFrame>
      </Workspace>
    </Body>

    <StatusBar>
      <StatusCell $grow />
      <StatusCell $w={22} $icon><PersonIcon bubble /></StatusCell>
      <StatusCell $w={22} $icon />
      <StatusCell $w={22} $icon><GlobeIcon /></StatusCell>
      <StatusCell $w={22} $icon><LockIcon /></StatusCell>
      <StatusCell $w={90}>Conectado</StatusCell>
      <StatusCell $w={125}>Spanish</StatusCell>
    </StatusBar>
    <BottomEdge />
  </Window>
);

export default App;
